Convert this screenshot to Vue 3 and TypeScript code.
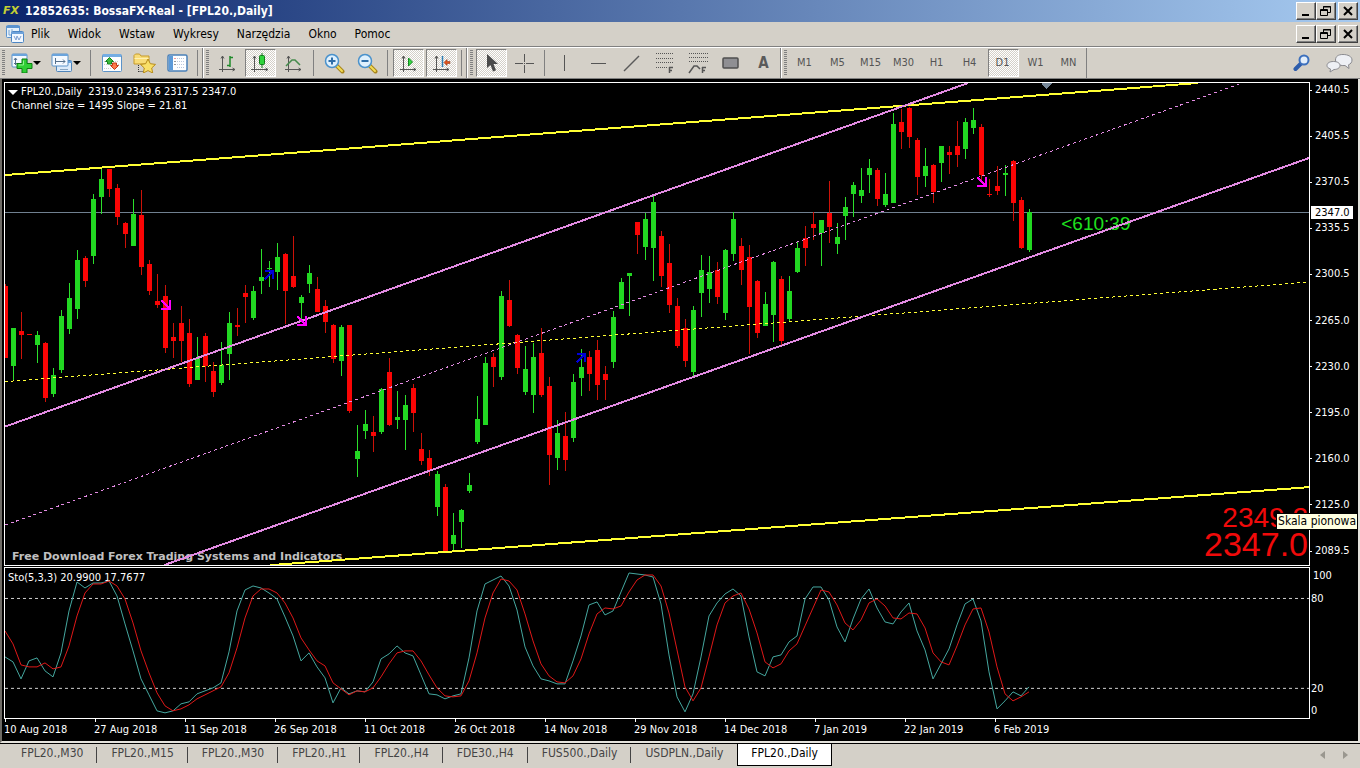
<script setup lang="ts">
type Candle = [up: 0 | 1, high: number, top: number, bottom: number, low: number]

const STEP = 8
const ORIGIN = 5

const candles: Candle[] = [
  [0, 284, 286, 358, 358], [1, 328, 328, 366, 380], [0, 312, 331, 335, 359], [0, 334, 334, 335, 335],
  [1, 331, 335, 345, 363], [0, 342, 343, 398, 402], [1, 368, 375, 394, 397], [1, 310, 316, 370, 373],
  [1, 283, 298, 329, 334], [1, 250, 260, 309, 319], [0, 256, 258, 281, 287], [1, 194, 199, 256, 264],
  [1, 168, 179, 197, 214], [0, 169, 169, 189, 197], [0, 184, 188, 217, 225], [0, 222, 223, 234, 248],
  [1, 199, 214, 246, 246], [0, 190, 215, 267, 275], [0, 260, 264, 291, 295], [0, 274, 301, 305, 308],
  [0, 285, 296, 348, 353], [0, 323, 337, 341, 358], [0, 306, 323, 341, 362], [0, 319, 333, 384, 387],
  [1, 337, 358, 380, 380], [0, 333, 336, 366, 382], [0, 362, 371, 392, 397], [1, 342, 365, 383, 385],
  [1, 312, 323, 354, 380], [0, 308, 325, 327, 336], [0, 285, 293, 297, 323], [1, 286, 291, 318, 320],
  [1, 249, 277, 281, 294], [1, 261, 268, 269, 287], [1, 243, 257, 272, 290], [0, 253, 254, 291, 324],
  [0, 236, 276, 287, 288], [1, 295, 297, 303, 320], [1, 265, 273, 284, 293], [0, 277, 289, 312, 312],
  [0, 300, 306, 322, 333], [0, 324, 325, 359, 363], [1, 325, 327, 361, 376], [0, 325, 325, 411, 413],
  [1, 425, 451, 459, 477], [1, 410, 424, 431, 439], [0, 416, 432, 436, 452], [1, 388, 389, 432, 434],
  [0, 358, 372, 425, 426], [1, 391, 417, 420, 429], [1, 395, 405, 420, 450], [0, 384, 388, 413, 432],
  [0, 433, 449, 461, 465], [0, 450, 458, 471, 476], [1, 471, 474, 507, 516], [0, 484, 487, 551, 551],
  [1, 513, 535, 544, 551], [1, 509, 510, 522, 548], [1, 473, 485, 491, 493], [1, 396, 419, 442, 444],
  [1, 357, 363, 425, 425], [0, 353, 357, 367, 387], [1, 291, 296, 377, 380], [0, 280, 300, 326, 327],
  [0, 334, 335, 368, 374], [1, 346, 369, 392, 395], [1, 343, 357, 395, 413], [0, 328, 353, 395, 397],
  [0, 377, 386, 455, 485], [1, 420, 433, 458, 470], [0, 412, 436, 460, 471], [1, 374, 382, 438, 442],
  [1, 349, 367, 378, 396], [0, 351, 357, 374, 391], [0, 340, 350, 385, 400], [0, 366, 374, 380, 400],
  [1, 311, 317, 362, 368], [1, 278, 282, 309, 309], [1, 273, 273, 276, 316], [0, 222, 222, 235, 254],
  [1, 213, 219, 247, 260], [1, 196, 202, 248, 281], [0, 231, 236, 276, 287], [0, 244, 263, 305, 313],
  [0, 298, 306, 346, 348], [0, 319, 328, 361, 367], [1, 306, 310, 372, 378], [1, 255, 270, 293, 317],
  [1, 256, 272, 289, 303], [0, 262, 270, 297, 304], [1, 249, 250, 313, 320], [1, 212, 219, 254, 261],
  [0, 238, 246, 270, 285], [0, 245, 257, 307, 354], [0, 280, 281, 333, 338], [1, 292, 304, 326, 326],
  [1, 261, 262, 315, 342], [0, 276, 279, 341, 345], [1, 276, 291, 319, 322], [1, 241, 248, 272, 273],
  [0, 226, 238, 248, 266], [0, 212, 224, 228, 240], [1, 220, 220, 233, 266], [0, 181, 213, 227, 243],
  [1, 223, 237, 244, 254], [1, 197, 207, 216, 240], [1, 182, 185, 194, 217], [1, 168, 190, 196, 203],
  [1, 159, 168, 175, 193], [0, 168, 170, 199, 206], [1, 173, 194, 205, 207], [1, 113, 124, 203, 203],
  [0, 109, 122, 132, 149], [0, 107, 108, 137, 148], [0, 138, 140, 177, 195], [1, 148, 166, 176, 187],
  [0, 164, 165, 192, 203], [1, 146, 146, 163, 182], [0, 146, 152, 155, 174], [0, 121, 146, 155, 167],
  [1, 118, 122, 149, 159], [1, 108, 120, 128, 134], [0, 124, 127, 175, 182], [0, 179, 194, 195, 197],
  [0, 166, 186, 191, 195], [1, 165, 173, 175, 196], [0, 160, 161, 203, 221], [0, 197, 200, 248, 249],
  [1, 209, 212, 250, 252],
]

const mainLine: number[] = [
  89, 94, 111, 93, 90, 103, 109, 85, 43, 14, 20, 15, 15, 13, 28, 56, 83, 111, 127, 143,
  145, 143, 136, 134, 126, 123, 120, 115, 84, 43, 22, 18, 20, 25, 31, 49, 68, 93, 85, 99,
  110, 135, 120, 126, 123, 124, 114, 91, 86, 78, 85, 88, 107, 126, 127, 131, 128, 126, 90, 43,
  16, 12, 8, 18, 42, 79, 98, 111, 113, 116, 116, 93, 68, 37, 34, 47, 43, 24, 5, 6,
  7, 9, 36, 87, 129, 144, 126, 89, 48, 35, 26, 21, 28, 69, 104, 108, 89, 87, 74, 68,
  31, 19, 19, 32, 59, 74, 51, 31, 21, 40, 54, 56, 44, 35, 63, 82, 111, 96, 81, 57,
  36, 31, 53, 104, 141, 133, 124, 128, 119,
]
const signalLine: number[] = [
  63, 76, 97, 99, 99, 95, 101, 99, 78, 48, 25, 16, 16, 13, 18, 31, 55, 83, 105, 125,
  138, 143, 141, 137, 131, 127, 123, 119, 105, 80, 50, 28, 21, 21, 25, 35, 50, 70, 82, 93,
  98, 115, 121, 127, 123, 124, 120, 109, 96, 85, 83, 83, 93, 107, 120, 128, 129, 128, 113, 85,
  50, 25, 11, 13, 22, 46, 73, 96, 108, 114, 115, 108, 91, 66, 46, 40, 41, 38, 24, 12,
  7, 7, 18, 45, 82, 119, 133, 120, 89, 57, 35, 28, 25, 41, 65, 94, 100, 96, 83, 76,
  58, 40, 22, 24, 37, 55, 62, 52, 35, 31, 38, 50, 51, 45, 46, 60, 85, 94, 97, 78,
  57, 41, 40, 64, 99, 126, 133, 129, 124,
]
const toPoints = (values: number[]): string => values.map((v, i) => `${ORIGIN + i * STEP},${v}`).join(' ')

const sellArrows: [number, number][] = [[161, 300], [297, 316], [977, 177]]
const buyArrows: [number, number][] = [[265, 270], [577, 353]]

const menus = ['Plik', 'Widok', 'Wstaw', 'Wykresy', 'Narzędzia', 'Okno', 'Pomoc']
const frames = ['M1', 'M5', 'M15', 'M30', 'H1', 'H4', 'D1', 'W1', 'MN']
const prices = ['2440.5', '2405.5', '2370.5', '2335.5', '2300.5', '2265.0', '2230.0', '2195.0', '2160.0', '2125.0', '2089.5']
const dates = [
  '10 Aug 2018', '27 Aug 2018', '11 Sep 2018', '26 Sep 2018', '11 Oct 2018', '26 Oct 2018',
  '14 Nov 2018', '29 Nov 2018', '14 Dec 2018', '7 Jan 2019', '22 Jan 2019', '6 Feb 2019',
]
const tabs = ['FPL20.,M30', 'FPL20.,M15', 'FPL20.,M30', 'FPL20.,H1', 'FPL20.,H4', 'FDE30.,H4', 'FUS500.,Daily', 'USDPLN.,Daily', 'FPL20.,Daily']
const activeTab = tabs.length - 1
</script>

<template>
  <div class="window">
    <header class="titlebar">
      <span class="logo" aria-hidden="true">FX</span>
      <h1>12852635: BossaFX-Real - [FPL20.,Daily]</h1>
      <div class="winbtns">
        <button type="button" aria-label="Minimalizuj"><svg width="12" height="12"><path d="M2 10h7" stroke="#000" stroke-width="2" /></svg></button>
        <button type="button" aria-label="Przywróć"><svg width="12" height="12" fill="none" stroke="#000"><path d="M3.500 4V1.500h7v6H8M3 2h8M.500 4.500h7v6h-7zM0 5.500h8" /></svg></button>
        <button type="button" class="close" aria-label="Zamknij"><svg width="12" height="12"><path d="M2 2l8 8M10 2l-8 8" stroke="#000" stroke-width="2" /></svg></button>
      </div>
    </header>

    <nav class="menubar">
      <svg class="docicon" width="19" height="18" viewBox="0 0 19 18">
        <rect x="1.500" y=".500" width="13" height="12" rx="1" fill="#e6f1fb" stroke="#5b93cf" />
        <path d="M1 2h14" stroke="#5b93cf" stroke-width="2" />
        <path d="M4 5v5h4M7 4v4" stroke="#7ba3cf" fill="none" />
        <rect x="6.500" y="6.500" width="12" height="11" rx="1" fill="#f2f8ff" stroke="#4d86c4" />
        <path d="M6 8h13" stroke="#6ea2da" stroke-width="2" />
        <path d="M9 11l2 4 1-4 2 4 2-4" stroke="#7f9fd0" fill="none" />
      </svg>
      <button v-for="m in menus" :key="m" type="button" class="menu">{{ m }}</button>
      <div class="winbtns">
        <button type="button" aria-label="Minimalizuj wykres"><svg width="12" height="12"><path d="M2 10h7" stroke="#000" stroke-width="2" /></svg></button>
        <button type="button" aria-label="Przywróć wykres"><svg width="12" height="12" fill="none" stroke="#000"><path d="M3.500 4V1.500h7v6H8M3 2h8M.500 4.500h7v6h-7zM0 5.500h8" /></svg></button>
        <button type="button" class="close" aria-label="Zamknij wykres"><svg width="12" height="12"><path d="M2 2l8 8M10 2l-8 8" stroke="#000" stroke-width="2" /></svg></button>
      </div>
    </nav>

    <div class="toolbar">
      <div class="group first">
        <i class="grip"></i>
        <button type="button" class="drop" aria-label="Nowy wykres">
          <svg width="22" height="20" viewBox="0 0 22 20">
            <rect x="1" y="1" width="15" height="13" rx="1" fill="#f4f9ff" stroke="#5c93c8" />
            <path d="M1 2h15" stroke="#6ba4dc" stroke-width="2" />
            <path d="M4.500 5v7M3 7l1.500-2L6 7M3 10.500h6" stroke="#55708c" fill="none" />
            <path d="M11 6h5v4.500h5v5h-5V20h-5v-4.500H6v-5h5z" fill="#2fcf35" stroke="#0b7d12" />
            <path d="M12.500 7.500v4.500H7.500" stroke="#8cf28c" fill="none" />
          </svg><i class="caret"></i>
        </button>
        <button type="button" class="drop" aria-label="Profile">
          <svg width="22" height="20" viewBox="0 0 22 20">
            <rect x="5.500" y="7.500" width="15" height="11" rx="1" fill="#dcebfa" stroke="#4e84ba" />
            <path d="M5 9h16" stroke="#6ba4dc" stroke-width="2" />
            <path d="M9 16.500h8" stroke="#8aa6c2" />
            <rect x="1" y="1" width="16" height="12" rx="1" fill="#f4f9ff" stroke="#5c93c8" />
            <path d="M1 2h16" stroke="#6ba4dc" stroke-width="2" />
            <path d="M4.500 5v6M4 8.500h10M12 6.500l2 2-2 2" stroke="#55708c" fill="none" />
          </svg><i class="caret"></i>
        </button>
        <i class="sep"></i>
        <button type="button" aria-label="Rynek">
          <svg width="20" height="20" viewBox="0 0 20 20">
            <rect x=".500" y="1.500" width="19" height="17" rx="1" fill="#fbfdff" stroke="#5c93c8" />
            <path d="M1 2.500h18" stroke="#74ade4" stroke-width="3" />
            <path d="M2 8.500h3M11 8.500h6M2 11.500h3M2 15.500h8M16 11.500h2" stroke="#ccc" stroke-dasharray="1 1" />
            <path d="M7.500 4.500l4 4h-2V11h-4V8.500h-2z" fill="#39b93c" stroke="#11831a" />
            <path d="M12.500 16.500l4-4h-2V10h-4v2.500h-2z" fill="#ff7a4a" stroke="#c23a16" />
          </svg>
        </button>
        <button type="button" aria-label="Nawigator">
          <svg width="23" height="20" viewBox="0 0 23 20">
            <path d="M1 11V2.500L2.500 1h4L8 3h8v8z" fill="#f8dc78" stroke="#c69a2a" />
            <path d="M1.500 5.500h14" stroke="#fff0b0" />
            <path d="M5.500 12v7M5.500 18.500h5" stroke="#333" stroke-dasharray="1 1" />
            <path d="M15 6l2.300 4.700 5.200.700-3.800 3.600 1 5L15 17.600 10.300 20l1-5-3.800-3.600 5.200-.700z" fill="#f9e069" stroke="#b78b1a" />
          </svg>
        </button>
        <button type="button" aria-label="Terminal">
          <svg width="21" height="19" viewBox="0 0 21 19">
            <rect x="1" y="1" width="19" height="16" rx="1.500" fill="#fdfeff" stroke="#4a80b8" stroke-width="1.500" />
            <path d="M4 2v14" stroke="#5c9ad8" stroke-width="4" />
            <path d="M7.500 4.500h1" stroke="#e33" /><path d="M7.500 7.500h1M7.500 10.500h1" stroke="#333" />
            <path d="M10 4.500h8M10 7.500h8M10 10.500h8M10 13.500h8" stroke="#b9c6dc" stroke-dasharray="1 1" />
          </svg>
        </button>
        <i class="sep"></i>
      </div>

      <div class="group">
        <i class="grip"></i>
        <button type="button" aria-label="Wykres słupkowy">
          <svg width="20" height="20" viewBox="0 0 20 20">
            <g class="axes"><path d="M4.500 3v16M1 16.500h16M3 5.500L4.500 3 6 5.500M14.500 15l2.500 1.500-2.500 1.500" /></g>
            <path d="M12 3v11M12 4.500h3M9 12.500h3" stroke="#1f8a2a" stroke-width="1.500" fill="none" />
          </svg>
        </button>
        <button type="button" class="on" aria-label="Wykres świecowy">
          <svg width="20" height="20" viewBox="0 0 20 20">
            <g class="axes"><path d="M3.500 3v16M0 16.500h17M2 5.500L3.500 3 5 5.500M14.500 15l2.500 1.500-2.500 1.500" /></g>
            <path d="M11 0v15" stroke="#137a1c" stroke-width="1" />
            <rect x="8.500" y="2.500" width="5" height="9" rx="1" fill="#2fd43c" stroke="#137a1c" />
          </svg>
        </button>
        <button type="button" aria-label="Wykres liniowy">
          <svg width="20" height="20" viewBox="0 0 20 20">
            <g class="axes"><path d="M4.500 3v16M1 16.500h16M3 5.500L4.500 3 6 5.500M14.500 15l2.500 1.500-2.500 1.500" /></g>
            <path d="M2 13l6-6h3l5 5" stroke="#458a4c" stroke-width="1.500" fill="none" />
          </svg>
        </button>
        <i class="sep"></i>
        <button type="button" aria-label="Powiększ">
          <svg width="21" height="21" viewBox="0 0 21 21">
            <path d="M12.500 12.500l6 6" stroke="#a8851c" stroke-width="4" stroke-linecap="round" /><path d="M13 13l5 5" stroke="#f3dc55" stroke-width="2" stroke-linecap="round" />
            <circle cx="8" cy="8" r="6.500" fill="#dff0fd" stroke="#4a92cc" stroke-width="1.500" />
            <path d="M4.500 8h7M8 4.500v7" stroke="#2f6ea8" stroke-width="2" />
          </svg>
        </button>
        <button type="button" aria-label="Zmniejsz">
          <svg width="21" height="21" viewBox="0 0 21 21">
            <path d="M12.500 12.500l6 6" stroke="#a8851c" stroke-width="4" stroke-linecap="round" /><path d="M13 13l5 5" stroke="#f3dc55" stroke-width="2" stroke-linecap="round" />
            <circle cx="8" cy="8" r="6.500" fill="#dff0fd" stroke="#4a92cc" stroke-width="1.500" />
            <path d="M4.500 8h7" stroke="#2f6ea8" stroke-width="2" />
          </svg>
        </button>
        <i class="sep"></i>
        <button type="button" class="on" aria-label="Autoprzewijanie">
          <svg width="20" height="20" viewBox="0 0 20 20">
            <g class="axes"><path d="M4.500 3v16M1 16.500h16M3 5.500L4.500 3 6 5.500M14.500 15l2.500 1.500-2.500 1.500" /></g>
            <path d="M9.500 5v8l4-4z" fill="#35d843" stroke="#128a1f" />
          </svg>
        </button>
        <button type="button" class="on" aria-label="Przesunięcie wykresu">
          <svg width="20" height="20" viewBox="0 0 20 20">
            <g class="axes"><path d="M4.500 3v16M1 16.500h16M3 5.500L4.500 3 6 5.500M14.500 15l2.500 1.500-2.500 1.500" /></g>
            <path d="M10.500 3v11" stroke="#2e7fb5" stroke-width="1.500" />
            <path d="M12 9.500l3-3v2h3v2h-3v2z" fill="#e0521c" stroke="#8a2c0a" stroke-width=".500" />
          </svg>
        </button>
        <i class="sep"></i>
      </div>

      <div class="group">
        <i class="grip"></i>
        <button type="button" class="on" aria-label="Kursor">
          <svg width="16" height="20" viewBox="0 0 16 20"><path d="M3 1v14l3.500-3 2.500 6.500 3-1.300L9.500 11H14z" fill="#4a4a4a" /></svg>
        </button>
        <button type="button" aria-label="Krzyżyk">
          <svg width="19" height="19" viewBox="0 0 19 19"><path d="M0 9.500h8M11 9.500h8M9.500 0v8M9.500 11v8M9 9.500h1" stroke="#555" /></svg>
        </button>
        <i class="sep"></i>
        <button type="button" aria-label="Linia pionowa"><svg width="17" height="17"><path d="M7.500 0v16" stroke="#555" /></svg></button>
        <button type="button" aria-label="Linia pozioma"><svg width="17" height="17"><path d="M1 8.500h15" stroke="#555" stroke-width="1" /></svg></button>
        <button type="button" aria-label="Linia trendu"><svg width="17" height="17"><path d="M1 16L16 1" stroke="#5a5a5a" stroke-width="1.500" /></svg></button>
        <button type="button" aria-label="Zniesienia Fibonacciego">
          <svg width="19" height="22" viewBox="0 0 19 22" fill="none" stroke="#555">
            <path d="M1 1.500h17M1 6.500h17M1 10.500h17M1 15.500h11" stroke-dasharray="1 1" />
            <path d="M14.500 21v-6M14 15.500h4M14 18.500h3" stroke-width="1.500" />
          </svg>
        </button>
        <button type="button" aria-label="Wachlarz Fibonacciego">
          <svg width="20" height="22" viewBox="0 0 20 22" fill="none" stroke="#555">
            <path d="M1 1.500h19M1 5.500h19M1 9.500h19" stroke-dasharray="1 1" />
            <path d="M1 21l5-7h3l3 3" stroke-width="1.500" />
            <path d="M14.500 21v-6M14 15.500h4M14 18.500h3" stroke-width="1.500" />
          </svg>
        </button>
        <button type="button" aria-label="Prostokąt"><svg width="17" height="13"><rect x="1" y="1" width="15" height="10" rx="1" fill="#8f8f93" stroke="#4f4f4f" stroke-width="1.500" /></svg></button>
        <button type="button" class="letter" aria-label="Tekst">A</button>
      </div>

      <div class="group">
        <i class="grip"></i>
        <button v-for="f in frames" :key="f" type="button" class="frame" :class="{ on: f === 'D1' }">{{ f }}</button>
      </div>

      <div class="tail">
        <button type="button" aria-label="Szukaj">
          <svg width="18" height="18" viewBox="0 0 18 18">
            <path d="M2.500 15L8 9.500" stroke="#2d5cab" stroke-width="4" stroke-linecap="round" />
            <circle cx="11" cy="6" r="4.500" fill="#e3eefb" stroke="#3d70bd" stroke-width="2" />
          </svg>
        </button>
        <button type="button" aria-label="Czat">
          <svg width="27" height="19" viewBox="0 0 27 19" fill="#eef0f5" stroke="#8a8a8f">
            <path d="M17 .500c5 0 9 2 9 5.500 0 2.500-1.500 4-3.500 4.800l.5 3.700-4-3C13 12 9.500 9.500 9.500 6S12 .500 17 .500z" />
            <path d="M7.500 7.500c4 0 6.500 1.600 6.500 4s-2.500 4-6 4L4 18l.500-3C2 14.200 1 13 1 11.500c0-2.400 2.500-4 6.500-4z" />
          </svg>
        </button>
      </div>
    </div>

    <main class="workspace">
      <section class="row price">
        <div class="pane">
          <p class="caption"><i class="tri"></i>FPL20.,Daily&nbsp; 2319.0 2349.6 2317.5 2347.0</p>
          <p class="channel">Channel size = 1495 Slope = 21.81</p>
          <span class="timer">&lt;610:39</span>
          <span class="promo">Free Download Forex Trading Systems and Indicators</span>
          <div class="quotes"><span class="ask">2349.2</span><span class="bid">2347.0</span></div>
          <svg class="plot" viewBox="5 83 1304 482" preserveAspectRatio="none" shape-rendering="crispEdges">
            <path d="M5 212.500H1309" stroke="#708090" />
            <g v-for="(c, i) in candles" :key="i">
              <rect :x="ORIGIN + i * STEP" :y="c[1]" width="1" :height="c[4] - c[1]" :fill="c[0] ? '#2be02b' : '#cc1208'" />
              <rect :x="ORIGIN + i * STEP - 2" :y="c[2]" width="5" :height="c[3] - c[2]" :fill="c[0] ? '#22d822' : '#fa0505'" />
            </g>
            <g stroke="#ffff33" fill="none">
              <path d="M5 175L1198 83M270 565L1309 487" stroke-width="2" />
              <path d="M5 381.500L1309 282" stroke-dasharray="3 3" />
            </g>
            <g stroke="#e28be2" fill="none">
              <path d="M5 426.500L968 83M164 565L1309 158" stroke-width="2" />
              <path d="M5 525L1242 83" stroke-dasharray="3 3" />
            </g>
            <path v-for="([x, y], i) in sellArrows" :key="'s' + i" :d="`M${x} ${y}l8 8M${x} ${y + 9}h10M${x + 9} ${y}v10`" stroke="#ff00ff" stroke-width="2" fill="none" />
            <path v-for="([x, y], i) in buyArrows" :key="'b' + i" :d="`M${x} ${y + 9}l8 -8M${x} ${y + 1}h9M${x + 8} ${y}v9`" stroke="#0000d8" stroke-width="2" fill="none" />
            <path d="M1041 83h12l-6 6z" fill="#778899" />
          </svg>
        </div>
        <div class="axis">
          <span v-for="p in prices" :key="p">{{ p }}</span>
          <b class="last">2347.0</b>
          <div class="tooltip" role="tooltip">Skala pionowa</div>
        </div>
      </section>

      <section class="row osc">
        <div class="pane">
          <p class="sto">Sto(5,3,3) 20.9900 17.7677</p>
          <svg class="plot" viewBox="5 0 1304 150" preserveAspectRatio="none" shape-rendering="crispEdges" fill="none">
            <path d="M5 30.500H1309M5 120.500H1309" stroke="#d0d0d0" stroke-dasharray="3 3" />
            <polyline :points="toPoints(mainLine)" stroke="#45a8a0" />
            <polyline :points="toPoints(signalLine)" stroke="#e01818" />
          </svg>
        </div>
        <div class="scale">
          <span class="l100">100</span><span class="l80">80</span><span class="l20">20</span><span class="l0">0</span>
        </div>
      </section>

      <div class="dates"><span v-for="d in dates" :key="d">{{ d }}</span></div>
    </main>

    <footer class="tabs">
      <button v-for="(t, i) in tabs" :key="i" type="button" :class="{ active: i === activeTab }">{{ t }}</button>
      <div class="scroll">
        <button type="button" aria-label="Poprzednie karty"><svg width="5" height="8"><path d="M5 0v8L0 4z" fill="#9a978f" /></svg></button>
        <button type="button" aria-label="Następne karty"><svg width="5" height="8"><path d="M0 0v8l5-4z" fill="#9a978f" /></svg></button>
      </div>
    </footer>
  </div>
</template>

<style>
body {
  margin: 0;
  background: #d4d0c8;
}
</style>

<style scoped>
* {
  box-sizing: border-box;
}
.window {
  display: flex;
  flex-direction: column;
  min-height: 100vh;
  background: #d4d0c8;
  color: #000;
  font: 11px/14px "DejaVu Sans Condensed", "DejaVu Sans", sans-serif;
}
button {
  margin: 0;
  padding: 0;
  border: 0;
  background: none;
  color: inherit;
  font: inherit;
}
svg {
  display: block;
  flex: none;
}
p {
  margin: 0;
}
.titlebar {
  display: flex;
  align-items: center;
  height: 22px;
  padding: 0 2px 0 3px;
  background: linear-gradient(90deg, #0a246a, #a6caf0);
  color: #fff;
}
.logo {
  width: 22px;
  color: #c3cf35;
  font: italic 700 11px/14px "DejaVu Sans", sans-serif;
}
h1 {
  margin: 0;
  font-size: 12px;
  font-weight: 700;
}
.winbtns {
  display: flex;
  margin-left: auto;
}
.winbtns button {
  display: flex;
  align-items: center;
  justify-content: center;
  width: 20px;
  height: 18px;
  background: #d4d0c8;
  border: 1px solid;
  border-color: #fff #404040 #404040 #fff;
  box-shadow: inset -1px -1px #808080;
}
.winbtns .close {
  margin-left: 2px;
}
.menubar {
  display: flex;
  align-items: center;
  height: 25px;
  padding: 0 2px 0 5px;
  border-bottom: 1px solid #808080;
}
.docicon {
  margin-right: 7px;
}
.menu {
  margin-right: 18px;
  font-size: 12px;
}
.toolbar {
  display: flex;
  height: 32px;
  border-top: 1px solid #fff;
  border-bottom: 1px solid #808080;
}
.group {
  display: flex;
  align-items: center;
  gap: 2px;
  padding: 0 1px 0 2px;
  border-left: 1px solid #fff;
  border-right: 1px solid #808080;
}
.group.first {
  border-left: 0;
}
.grip {
  width: 3px;
  height: 26px;
  margin-right: 1px;
  background: repeating-linear-gradient(#808080 0 1px, #d4d0c8 1px 2px);
}
.sep {
  width: 1px;
  height: 26px;
  margin: 0 3px 0 2px;
  background: #808080;
}
.group button {
  display: flex;
  align-items: center;
  justify-content: center;
  width: 31px;
  height: 28px;
}
.group .drop {
  width: 38px;
  padding-right: 3px;
}
.caret {
  border: 4px solid transparent;
  border-top-color: #000;
  border-bottom: 0;
}
.group .on {
  background: repeating-conic-gradient(#fff 0 25%, #d4d0c8 0 50%) 0 0 / 2px 2px;
  border: 1px solid;
  border-color: #808080 #fff #fff #808080;
}
.axes {
  fill: none;
  stroke: #555;
  stroke-width: 1;
}
.group .letter {
  color: #5a5a5a;
  font: 700 15px/18px "DejaVu Sans Condensed", sans-serif;
}
.group .frame {
  padding-right: 2px;
  color: #555;
}
.tail {
  display: flex;
  align-items: center;
  gap: 15px;
  margin-left: auto;
  padding-right: 7px;
}
.workspace {
  display: flex;
  flex: 1;
  flex-direction: column;
  padding: 3px 0 0 2px;
  background: #000;
  border-left: 2px solid #6e6b65;
  border-right: 2px solid #e4e2dc;
  border-bottom: 2px solid #e4e2dc;
  color: #fff;
}
.row {
  display: grid;
  grid-template-columns: 1fr 48px;
}
.price {
  flex: 484 0 300px;
}
.osc {
  flex: 152 0 94px;
  margin-top: 1px;
}
.pane {
  position: relative;
  border: 1px solid #fff;
  overflow: hidden;
}
.plot {
  position: absolute;
  inset: 0;
  width: 100%;
  height: 100%;
}
.caption {
  display: flex;
  align-items: center;
  gap: 3px;
  padding: 2px 0 0 3px;
}
.tri {
  border: 5px solid transparent;
  border-top-color: #fff;
  border-bottom: 0;
}
.channel {
  padding-left: 6px;
}
.sto {
  padding: 3px;
}
.timer {
  position: absolute;
  left: 81%;
  top: 27%;
  color: #1fe01f;
  font: 19px/22px "Liberation Sans", Arial, sans-serif;
}
.promo {
  position: absolute;
  left: 7px;
  bottom: 1px;
  color: #c0c0c0;
  font: 700 11px/14px "DejaVu Sans", Verdana, sans-serif;
}
.quotes {
  position: absolute;
  right: 1px;
  bottom: 4px;
  display: flex;
  flex-direction: column;
  align-items: flex-end;
  color: #f00a0a;
  font-family: "Liberation Sans", Arial, sans-serif;
}
.ask {
  font-size: 28px;
  line-height: 18px;
}
.bid {
  font-size: 34px;
  line-height: 34px;
}
.axis {
  position: relative;
  display: flex;
  flex-direction: column;
  justify-content: space-between;
  padding: 1px 0 8px;
}
.axis span {
  display: flex;
  align-items: center;
  gap: 3px;
}
.axis span::before {
  content: "";
  width: 2px;
  height: 1px;
  background: #fff;
}
.last {
  position: absolute;
  left: 1px;
  top: 124px;
  width: 42px;
  padding-left: 4px;
  background: #fff;
  color: #000;
  font-weight: 400;
  line-height: 13px;
}
.tooltip {
  position: absolute;
  right: 0;
  bottom: 36px;
  padding: 0 1px;
  background: #ffffe1;
  border: 1px solid #000;
  color: #000;
  font-size: 12px;
  line-height: 15px;
  white-space: nowrap;
}
.scale {
  display: grid;
  grid-template-rows: 14px 9fr 14px 76fr 14px 8fr 14px;
  padding: 2px 0 1px 1px;
}
.l100 {
  grid-row: 1;
  padding-left: 2px;
}
.l80 {
  grid-row: 3;
}
.l20 {
  grid-row: 5;
}
.l0 {
  grid-row: 7;
}
.dates {
  display: flex;
  height: 22px;
  margin-right: 48px;
}
.dates span {
  position: relative;
  flex: 0 0 calc(100% * 90 / 1306);
  padding-top: 4px;
  white-space: nowrap;
}
.dates span::before {
  content: "";
  position: absolute;
  left: 1px;
  top: 0;
  width: 1px;
  height: 3px;
  background: #fff;
}
.tabs {
  display: flex;
  height: 25px;
  padding: 0 12px 2px 7px;
  border-top: 1px solid #000;
  color: #444;
  font-size: 12px;
}
.tabs > button {
  position: relative;
  padding: 0 14px 4px;
}
.tabs > button:not(.active)::after {
  content: "";
  position: absolute;
  right: 0;
  top: 3px;
  width: 1px;
  height: 16px;
  background: #444;
}
.tabs > button:nth-last-of-type(2)::after {
  display: none;
}
.tabs > .active {
  padding: 0 13px 4px;
  background: #fff;
  border: 1px solid #000;
  border-top: 0;
  color: #000;
}
.scroll {
  display: flex;
  align-items: center;
  gap: 18px;
  margin-left: auto;
}
</style>
